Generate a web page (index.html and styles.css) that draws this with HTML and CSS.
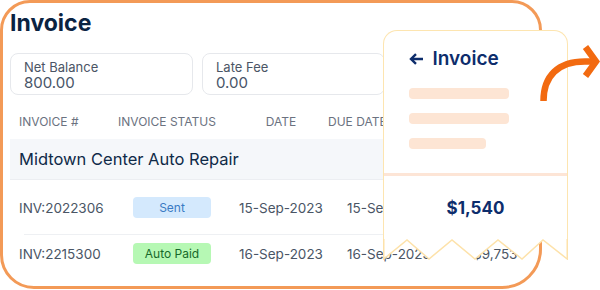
FILE: index.html
```html
<!DOCTYPE html>
<html lang="en">
<head>
    <meta charset="UTF-8" />
    <meta name="viewport" content="width=device-width, initial-scale=1.0" />
    <title>Invoice</title>
    <link rel="stylesheet" href="styles.css">
</head>
<body>
    <div class="scene">
        <div class="card">
            <h1>Invoice</h1>
            <div class="summary">
                <div class="summary-box">
                    <div class="summary-label">Net Balance</div>
                    <div class="summary-value">800.00</div>
                </div>
                <div class="summary-box">
                    <div class="summary-label">Late Fee</div>
                    <div class="summary-value">0.00</div>
                </div>
            </div>
            <div class="table">
                <div class="row head">
                    <div>INVOICE #</div>
                    <div>INVOICE STATUS</div>
                    <div class="center">DATE</div>
                    <div class="due-head">DUE DATE</div>
                    <div class="amount"></div>
                </div>
                <div class="group">Midtown Center Auto Repair</div>
                <div class="row item first">
                    <div>INV:2022306</div>
                    <div><span class="badge sent">Sent</span></div>
                    <div class="center">15-Sep-2023</div>
                    <div class="due">15-Sep-2023</div>
                    <div class="amount"></div>
                </div>
                <div class="row item second">
                    <div>INV:2215300</div>
                    <div><span class="badge paid">Auto Paid</span></div>
                    <div class="center">16-Sep-2023</div>
                    <div class="due">16-Sep-2023</div>
                    <div class="amount">$9,753</div>
                </div>
            </div>
        </div>

        <div class="receipt">
            <div class="receipt-body">
                <div class="receipt-head">
                    <div class="receipt-title">
                        <svg width="15" height="12" viewBox="0 0 15 12">
                            <path d="M14 6H2.5M7 1.2L2 6l5 4.8" fill="none" stroke="#0d2d6c" stroke-width="2.4"/>
                        </svg>
                        <span>Invoice</span>
                    </div>
                    <div class="bar"></div>
                    <div class="bar"></div>
                    <div class="bar short"></div>
                </div>
                <div class="receipt-total">$1,540</div>
            </div>
            <svg class="zigzag" width="185" height="21" viewBox="0 0 185 21">
                <path d="M0 0V20L24 1L46 20L69 1L92 20L115 1L139 20L160 1L185 20V0Z" fill="#fff"/>
                <path d="M0.75 0V20L24 1L46 20L69 1L92 20L115 1L139 20L160 1L184.25 20V0" fill="none" stroke="#fde2aa" stroke-width="1.5"/>
            </svg>
        </div>

        <svg class="arrow" width="62" height="64" viewBox="538 40 62 64">
            <path d="M543.5 101C543.5 76 558 61.5 585 61.5H595" fill="none" stroke="#f26a10" stroke-width="6.5"/>
            <path d="M585.5 47L596 61.5L585.5 76" fill="none" stroke="#f26a10" stroke-width="6.5"/>
        </svg>
    </div>
</body>
</html>
```

FILE: styles.css
```css
body {
    margin: 0;
    background-color: #fff;
    font-family: Inter, "Noto Sans", sans-serif;
}

.scene {
    position: relative;
    width: 600px;
    height: 290px;
    overflow: hidden;
}

.card {
    width: 542px;
    height: 289px;
    box-sizing: border-box;
    border: 3px solid #f39a57;
    border-radius: 30px 30px 40px 34px;
    padding: 6px 7px 0;
    overflow: hidden;
}

h1 {
    margin: 0;
    font-size: 23px;
    line-height: 28px;
    font-weight: 700;
    color: #0a2342;
}

.summary {
    display: flex;
    gap: 9px;
    margin-top: 16px;
}

.summary-box {
    width: 183px;
    height: 42px;
    flex-shrink: 0;
    box-sizing: border-box;
    border: 1px solid #e6e8ec;
    border-radius: 8px;
    padding: 6px 13px 0;
}

.summary-label {
    font-size: 13px;
    line-height: 15px;
    color: #4b5565;
}

.summary-value {
    font-size: 15px;
    line-height: 16px;
    color: #475467;
}

.table {
    width: 560px;
}

.row {
    display: grid;
    grid-template-columns: 99px 114px 98px 110px 1fr;
    align-items: center;
    padding-left: 9px;
    font-size: 13.5px;
    color: #4a5565;
}

.row.head {
    height: 44px;
    box-sizing: border-box;
    padding-top: 8px;
    font-size: 12px;
    color: #6b7280;
}

.center {
    text-align: center;
}

.due-head {
    margin-left: -2px;
}

.due {
    padding-left: 17px;
}

.amount {
    padding-left: 33px;
}

.group {
    height: 41px;
    box-sizing: border-box;
    display: flex;
    align-items: center;
    padding-left: 9px;
    background-color: #f5f7fa;
    border-bottom: 1px solid #eceef2;
    font-size: 16.5px;
    color: #0f2a48;
}

.row.first {
    height: 55px;
    background: linear-gradient(#eef0f3, #eef0f3) 14px 100% / 100% 1px no-repeat;
}

.row.second {
    height: 37px;
}

.badge {
    display: block;
    width: 78px;
    height: 21px;
    margin-left: 15px;
    border-radius: 4px;
    font-size: 12px;
    line-height: 21px;
    text-align: center;
}

.badge.sent {
    background-color: #d4e9fd;
    color: #3a7bc4;
}

.badge.paid {
    background-color: #b6f8b4;
    color: #17692a;
}

/* receipt lying over the card */
.receipt {
    position: absolute;
    left: 383px;
    top: 30px;
    width: 185px;
}

.receipt-body {
    box-sizing: border-box;
    background-color: #fff;
    border: 1.5px solid #fde5b0;
    border-bottom: none;
    border-radius: 14px 14px 0 0;
}

.receipt-head {
    height: 144.5px;
    box-sizing: border-box;
    padding: 16px 0 0 24.5px;
    border-bottom: 3px solid #fde5d6;
}

.receipt-title {
    display: flex;
    align-items: center;
    gap: 9px;
    font-size: 19px;
    line-height: 23px;
    font-weight: 600;
    color: #0d2d6c;
    margin-bottom: 18px;
}

.bar {
    width: 100px;
    height: 11px;
    border-radius: 4px;
    background-color: #fde5d4;
    margin-bottom: 14px;
}

.bar.short {
    width: 77px;
}

.receipt-total {
    height: 64px;
    display: flex;
    align-items: center;
    justify-content: center;
    font-size: 17px;
    font-weight: 700;
    color: #0d2d6c;
}

.zigzag {
    display: block;
    margin-top: -1px;
}

.arrow {
    position: absolute;
    left: 538px;
    top: 40px;
}
```
